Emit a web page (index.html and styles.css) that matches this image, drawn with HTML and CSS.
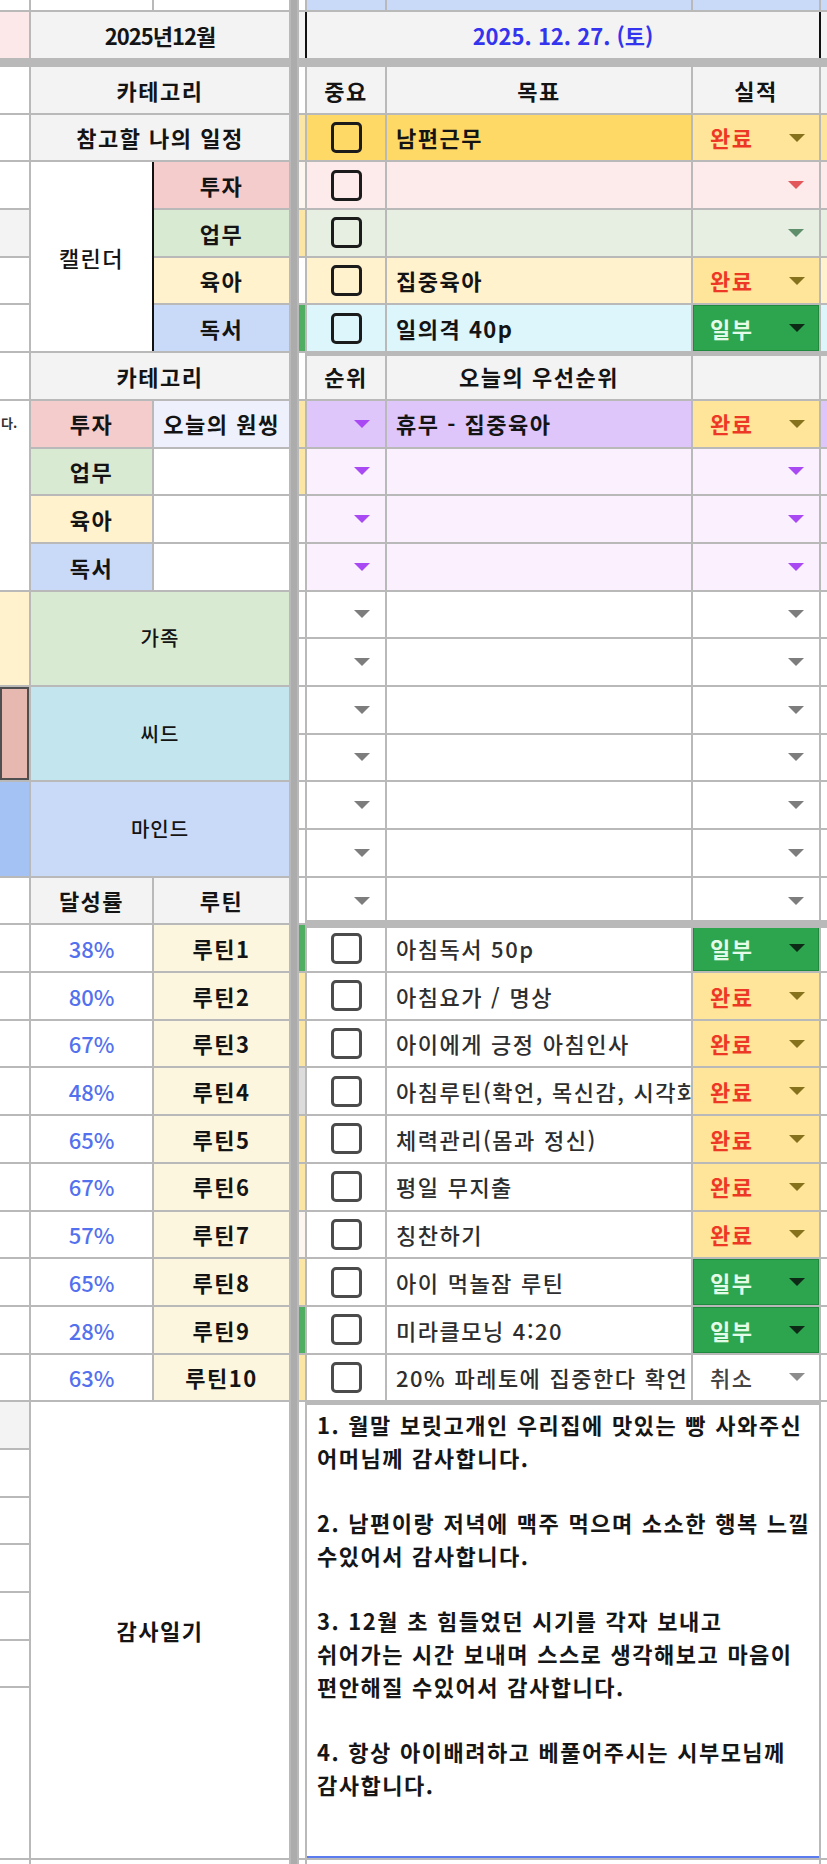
FILE: index.html
```html
<!DOCTYPE html>
<html lang="ko">
<head>
<meta charset="utf-8">
<title>하루 계획표</title>
<link rel="stylesheet" href="styles.css">
</head>
<body>
<div class="sheet">
  <div class="sep"></div>

  <!-- row 1 : top partial -->
  <div class="c"></div><div class="c"></div><div class="c"></div>
  <div class="c"></div>
  <div class="c blue"></div><div class="c blue"></div><div class="c blue"></div><div class="c blue"></div>

  <!-- row 2 : month / date -->
  <div class="c lpink"></div>
  <div class="c s2 hd month">2025년12월</div>
  <div class="c gray"></div>
  <div class="c s3 hd date">2025. 12. 27. (토)</div>
  <div class="c gray"></div>

  <!-- row 3 : thick rule -->
  <div class="fill s3"></div>
  <div class="fill s5"></div>

  <!-- row 4 : headers -->
  <div class="c"></div>
  <div class="c s2 hd">카테고리</div>
  <div class="c"></div>
  <div class="c hd">중요</div>
  <div class="c hd">목표</div>
  <div class="c hd">실적</div>
  <div class="c gray"></div>

  <!-- row 5 -->
  <div class="c"></div>
  <div class="c s2 hd">참고할 나의 일정</div>
  <div class="c n-yel"></div>
  <div class="c gold"><span class="cb"></span></div>
  <div class="c gold tx">남편근무</div>
  <div class="c st done"><span>완료</span><span class="ar"></span></div>
  <div class="c gold2"></div>

  <!-- row 6 -->
  <div class="c"></div>
  <div class="c r4 cal">캘린더</div>
  <div class="c pink lbl">투자</div>
  <div class="c n-pale"></div>
  <div class="c ppink"><span class="cb"></span></div>
  <div class="c ppink"></div>
  <div class="c ppink dd"><span class="ar a-pink"></span></div>
  <div class="c ppink"></div>

  <!-- row 7 -->
  <div class="c gray"></div>
  <div class="c green lbl">업무</div>
  <div class="c n-yel"></div>
  <div class="c pgreen"><span class="cb"></span></div>
  <div class="c pgreen"></div>
  <div class="c pgreen dd"><span class="ar a-green"></span></div>
  <div class="c pgreen"></div>

  <!-- row 8 -->
  <div class="c"></div>
  <div class="c yellow lbl">육아</div>
  <div class="c"></div>
  <div class="c yellow"><span class="cb"></span></div>
  <div class="c yellow tx">집중육아</div>
  <div class="c st done"><span>완료</span><span class="ar"></span></div>
  <div class="c yellow"></div>

  <!-- row 9 -->
  <div class="c"></div>
  <div class="c blue lbl">독서</div>
  <div class="c n-grn"></div>
  <div class="c pcyan"><span class="cb"></span></div>
  <div class="c pcyan tx">일의격 40p</div>
  <div class="c st part"><span>일부</span><span class="ar"></span></div>
  <div class="c pcyan"></div>

  <!-- row 10 : second header -->
  <div class="c"></div>
  <div class="c s2 hd">카테고리</div>
  <div class="c"></div>
  <div class="c hd tt">순위</div>
  <div class="c hd tt">오늘의 우선순위</div>
  <div class="c hd tt"></div>
  <div class="c gray tt"></div>

  <!-- row 11 -->
  <div class="c r4 frag"><span>다.</span></div>
  <div class="c pink lbl">투자</div>
  <div class="c lav lbl">오늘의 원씽</div>
  <div class="c n-yel"></div>
  <div class="c purple dd"><span class="ar a-purple"></span></div>
  <div class="c purple tx">휴무 - 집중육아</div>
  <div class="c st done"><span>완료</span><span class="ar"></span></div>
  <div class="c purple"></div>

  <!-- row 12 -->
  <div class="c green lbl">업무</div>
  <div class="c"></div>
  <div class="c n-yel"></div>
  <div class="c ppurple dd"><span class="ar a-purple"></span></div>
  <div class="c ppurple"></div>
  <div class="c ppurple dd"><span class="ar a-purple"></span></div>
  <div class="c ppurple"></div>

  <!-- row 13 -->
  <div class="c yellow lbl">육아</div>
  <div class="c"></div>
  <div class="c"></div>
  <div class="c ppurple dd"><span class="ar a-purple"></span></div>
  <div class="c ppurple"></div>
  <div class="c ppurple dd"><span class="ar a-purple"></span></div>
  <div class="c ppurple"></div>

  <!-- row 14 -->
  <div class="c blue lbl">독서</div>
  <div class="c"></div>
  <div class="c"></div>
  <div class="c ppurple dd"><span class="ar a-purple"></span></div>
  <div class="c ppurple"></div>
  <div class="c ppurple dd"><span class="ar a-purple"></span></div>
  <div class="c ppurple"></div>

  <!-- rows 15-16 : 가족 -->
  <div class="c r2 yellow"></div>
  <div class="c s2 r2 green big">가족</div>
  <div class="c"></div><div class="c dd"><span class="ar"></span></div><div class="c"></div><div class="c dd"><span class="ar"></span></div><div class="c"></div>
  <div class="c"></div><div class="c dd"><span class="ar"></span></div><div class="c"></div><div class="c dd"><span class="ar"></span></div><div class="c"></div>

  <!-- rows 17-18 : 씨드 -->
  <div class="c r2 salmon"></div>
  <div class="c s2 r2 cyan big">씨드</div>
  <div class="c"></div><div class="c dd"><span class="ar"></span></div><div class="c"></div><div class="c dd"><span class="ar"></span></div><div class="c"></div>
  <div class="c"></div><div class="c dd"><span class="ar"></span></div><div class="c"></div><div class="c dd"><span class="ar"></span></div><div class="c"></div>

  <!-- rows 19-20 : 마인드 -->
  <div class="c r2 sky"></div>
  <div class="c s2 r2 blue big">마인드</div>
  <div class="c"></div><div class="c dd"><span class="ar"></span></div><div class="c"></div><div class="c dd"><span class="ar"></span></div><div class="c"></div>
  <div class="c"></div><div class="c dd"><span class="ar"></span></div><div class="c"></div><div class="c dd"><span class="ar"></span></div><div class="c"></div>

  <!-- row 21 -->
  <div class="c"></div>
  <div class="c hd">달성률</div>
  <div class="c hd">루틴</div>
  <div class="c"></div>
  <div class="c dd tb"><span class="ar"></span></div>
  <div class="c tb"></div>
  <div class="c dd tb"><span class="ar"></span></div>
  <div class="c tb"></div>

  <!-- routines -->
  <div class="c"></div><div class="c pct">38%</div><div class="c cream lbl">루틴1</div><div class="c n-grn"></div>
  <div class="c tt"><span class="cb lt"></span></div><div class="c item tt">아침독서 50p</div>
  <div class="c st part tt"><span>일부</span><span class="ar"></span></div><div class="c tt"></div>

  <div class="c"></div><div class="c pct">80%</div><div class="c cream lbl">루틴2</div><div class="c n-yel"></div>
  <div class="c"><span class="cb lt"></span></div><div class="c item">아침요가 / 명상</div>
  <div class="c st done"><span>완료</span><span class="ar"></span></div><div class="c"></div>

  <div class="c"></div><div class="c pct">67%</div><div class="c cream lbl">루틴3</div><div class="c n-yel"></div>
  <div class="c"><span class="cb lt"></span></div><div class="c item">아이에게 긍정 아침인사</div>
  <div class="c st done"><span>완료</span><span class="ar"></span></div><div class="c"></div>

  <div class="c"></div><div class="c pct">48%</div><div class="c cream lbl">루틴4</div><div class="c n-gry"></div>
  <div class="c"><span class="cb lt"></span></div><div class="c item">아침루틴(확언, 목신감, 시각화)</div>
  <div class="c st done"><span>완료</span><span class="ar"></span></div><div class="c"></div>

  <div class="c"></div><div class="c pct">65%</div><div class="c cream lbl">루틴5</div><div class="c n-yel"></div>
  <div class="c"><span class="cb lt"></span></div><div class="c item">체력관리(몸과 정신)</div>
  <div class="c st done"><span>완료</span><span class="ar"></span></div><div class="c"></div>

  <div class="c"></div><div class="c pct">67%</div><div class="c cream lbl">루틴6</div><div class="c n-yel"></div>
  <div class="c"><span class="cb lt"></span></div><div class="c item">평일 무지출</div>
  <div class="c st done"><span>완료</span><span class="ar"></span></div><div class="c"></div>

  <div class="c"></div><div class="c pct">57%</div><div class="c cream lbl">루틴7</div><div class="c n-pale"></div>
  <div class="c"><span class="cb lt"></span></div><div class="c item">칭찬하기</div>
  <div class="c st done"><span>완료</span><span class="ar"></span></div><div class="c"></div>

  <div class="c"></div><div class="c pct">65%</div><div class="c cream lbl">루틴8</div><div class="c n-yel"></div>
  <div class="c"><span class="cb lt"></span></div><div class="c item">아이 먹놀잠 루틴</div>
  <div class="c st part"><span>일부</span><span class="ar"></span></div><div class="c"></div>

  <div class="c"></div><div class="c pct">28%</div><div class="c cream lbl">루틴9</div><div class="c n-grn"></div>
  <div class="c"><span class="cb lt"></span></div><div class="c item">미라클모닝 4:20</div>
  <div class="c st part"><span>일부</span><span class="ar"></span></div><div class="c"></div>

  <div class="c"></div><div class="c pct">63%</div><div class="c cream lbl">루틴10</div><div class="c n-yel"></div>
  <div class="c"><span class="cb lt"></span></div><div class="c item">20% 파레토에 집중한다 확언</div>
  <div class="c st cancel"><span>취소</span><span class="ar"></span></div><div class="c"></div>

  <!-- gratitude journal -->
  <div class="c gray"></div>
  <div class="c s2 r7 lbl">감사일기</div>
  <div class="c r7"></div>
  <div class="c s3 r7 diary tt">1. 월말 보릿고개인 우리집에 맛있는 빵 사와주신<br>어머님께 감사합니다.<br><br>2. 남편이랑 저녁에 맥주 먹으며 소소한 행복 느낄<br>수있어서 감사합니다.<br><br>3. 12월 초 힘들었던 시기를 각자 보내고<br>쉬어가는 시간 보내며 스스로 생각해보고 마음이<br>편안해질 수있어서 감사합니다.<br><br>4. 항상 아이배려하고 베풀어주시는 시부모님께<br>감사합니다.</div>
  <div class="c r7"></div>
  <div class="c"></div>
  <div class="c"></div>
  <div class="c"></div>
  <div class="c"></div>
  <div class="c"></div>
  <div class="c"></div>

  <!-- bottom partial -->
  <div class="c"></div>
  <div class="c s2"></div>
  <div class="c"></div>
  <div class="c s3"></div>
  <div class="c"></div>
</div>
</body>
</html>
```

FILE: styles.css
```css
* { box-sizing: border-box; }
html, body { margin: 0; padding: 0; background: #fff; }
body {
  font-family: "Noto Sans CJK KR", "Noto Sans", sans-serif;
  color: #141414;
}

.sheet {
  display: grid;
  width: 827px;
  height: 1864px;
  grid-template-columns: 29px 121px 135px 6px 6px 78px 304px 126px 6px;
  grid-template-rows: 10px 46px 5px repeat(34, 45.7px) 169.2px 4px;
  gap: 2px;
  background: #b9b9b9;
  overflow: hidden;
}

.sep { grid-column: 4; grid-row: 1 / -1; background: #acacac; }
.fill { background: #b9b9b9; }

.c {
  display: flex;
  align-items: center;
  justify-content: center;
  min-width: 0;
  overflow: hidden;
  white-space: nowrap;
  background: #fff;
  font-size: 22px;
  line-height: 1.2;
  letter-spacing: 1.5px;
}

/* spans */
.s2 { grid-column: span 2; }
.s3 { grid-column: span 3; }
.s5 { grid-column: span 5; }
.r2 { grid-row: span 2; }
.r4 { grid-row: span 4; }
.r7 { grid-row: span 7; }

/* fills */
.gray { background: #f3f3f3; }
.hd { background: #f3f3f3; font-weight: 700; }
.lpink { background: #fce8e8; }
.blue { background: #c9daf8; }
.pink { background: #f4cccc; }
.green { background: #d9ead3; }
.yellow { background: #fff2cc; }
.cyan { background: #c3e6ee; }
.sky { background: #a4c2f4; }
.salmon { background: #e6b8af; box-shadow: inset 0 0 0 2px #4f4f4f; }
.cream { background: #fdf6df; }
.lav { background: #eef1fb; }
.gold { background: #ffd966; }
.gold2 { background: #ffe599; }
.ppink { background: #fdeaea; }
.pgreen { background: #e6efe2; }
.pcyan { background: #dcf6fc; }
.purple { background: #dec6fb; }
.ppurple { background: #fbf1fe; }

/* narrow strip colors */
.n-yel { background: #fbe6a6; }
.n-pale { background: #fdf6f0; }
.n-grn { background: #4fae62; }
.n-gry { background: #dcdcdc; }

/* thick rules inside right-hand cells */
.tt { box-shadow: inset 0 3px 0 #b9b9b9; }
.tb { box-shadow: inset 0 -3px 0 #b9b9b9; }

.month { letter-spacing: -1px; }
.date {
  color: #3434ee;
  letter-spacing: 0;
  box-shadow: -2px 0 0 #111, 2px 0 0 #111;
}

.lbl { font-weight: 700; }
.cal { font-weight: 500; box-shadow: 2px 0 0 #111; }
.big { font-size: 20px; font-weight: 500; letter-spacing: 1px; }

.frag {
  align-items: flex-start;
  justify-content: flex-start;
  font-size: 13px;
  font-weight: 700;
  letter-spacing: 0;
  padding: 14px 0 0 1px;
}
.frag span { color: #333; }

.tx {
  justify-content: flex-start;
  padding-left: 9px;
  font-weight: 700;
}
.item {
  justify-content: flex-start;
  padding-left: 9px;
  font-weight: 500;
  color: #2e2e2e;
  letter-spacing: 1.5px;
  word-spacing: 0.5px;
}
.pct { color: #5371ee; font-weight: 500; letter-spacing: 0; }

/* status chips */
.st {
  justify-content: space-between;
  padding: 0 14px 0 17px;
  font-weight: 700;
}
.done { background: #ffe599; color: #ee3826; }
.part { background: #2da44e; color: #e4fbe8; box-shadow: inset 0 0 0 1px #1f8a3e; }
.part.tt { box-shadow: inset 0 3px 0 #b9b9b9, inset 0 0 0 1px #1f8a3e; }
.cancel { color: #444; font-weight: 500; }

.dd { justify-content: flex-end; padding-right: 15px; }

.ar {
  display: block;
  width: 0;
  height: 0;
  border-left: 8px solid transparent;
  border-right: 8px solid transparent;
  border-top: 8px solid #7d7d7d;
}
.done .ar { border-top-color: #86711d; }
.part .ar { border-top-color: #0c2a15; }
.cancel .ar { border-top-color: #8c8c8c; }
.a-pink { border-top-color: #e2585a; }
.a-green { border-top-color: #5f8e6b; }
.a-purple { border-top-color: #a949f4; }

/* checkbox */
.cb {
  display: block;
  width: 31px;
  height: 31px;
  border: 3px solid #1b1b1b;
  border-radius: 5px;
}
.cb.lt { border-color: #4b4b4b; }

/* gratitude journal */
.diary {
  display: block;
  padding: 6px 8px 0 10px;
  font-size: 22px;
  line-height: 32.7px;
  font-weight: 700;
  color: #161616;
  letter-spacing: 1.5px;
  word-spacing: 0.5px;
  border-bottom: 2px solid #5b7bf0;
}
```
